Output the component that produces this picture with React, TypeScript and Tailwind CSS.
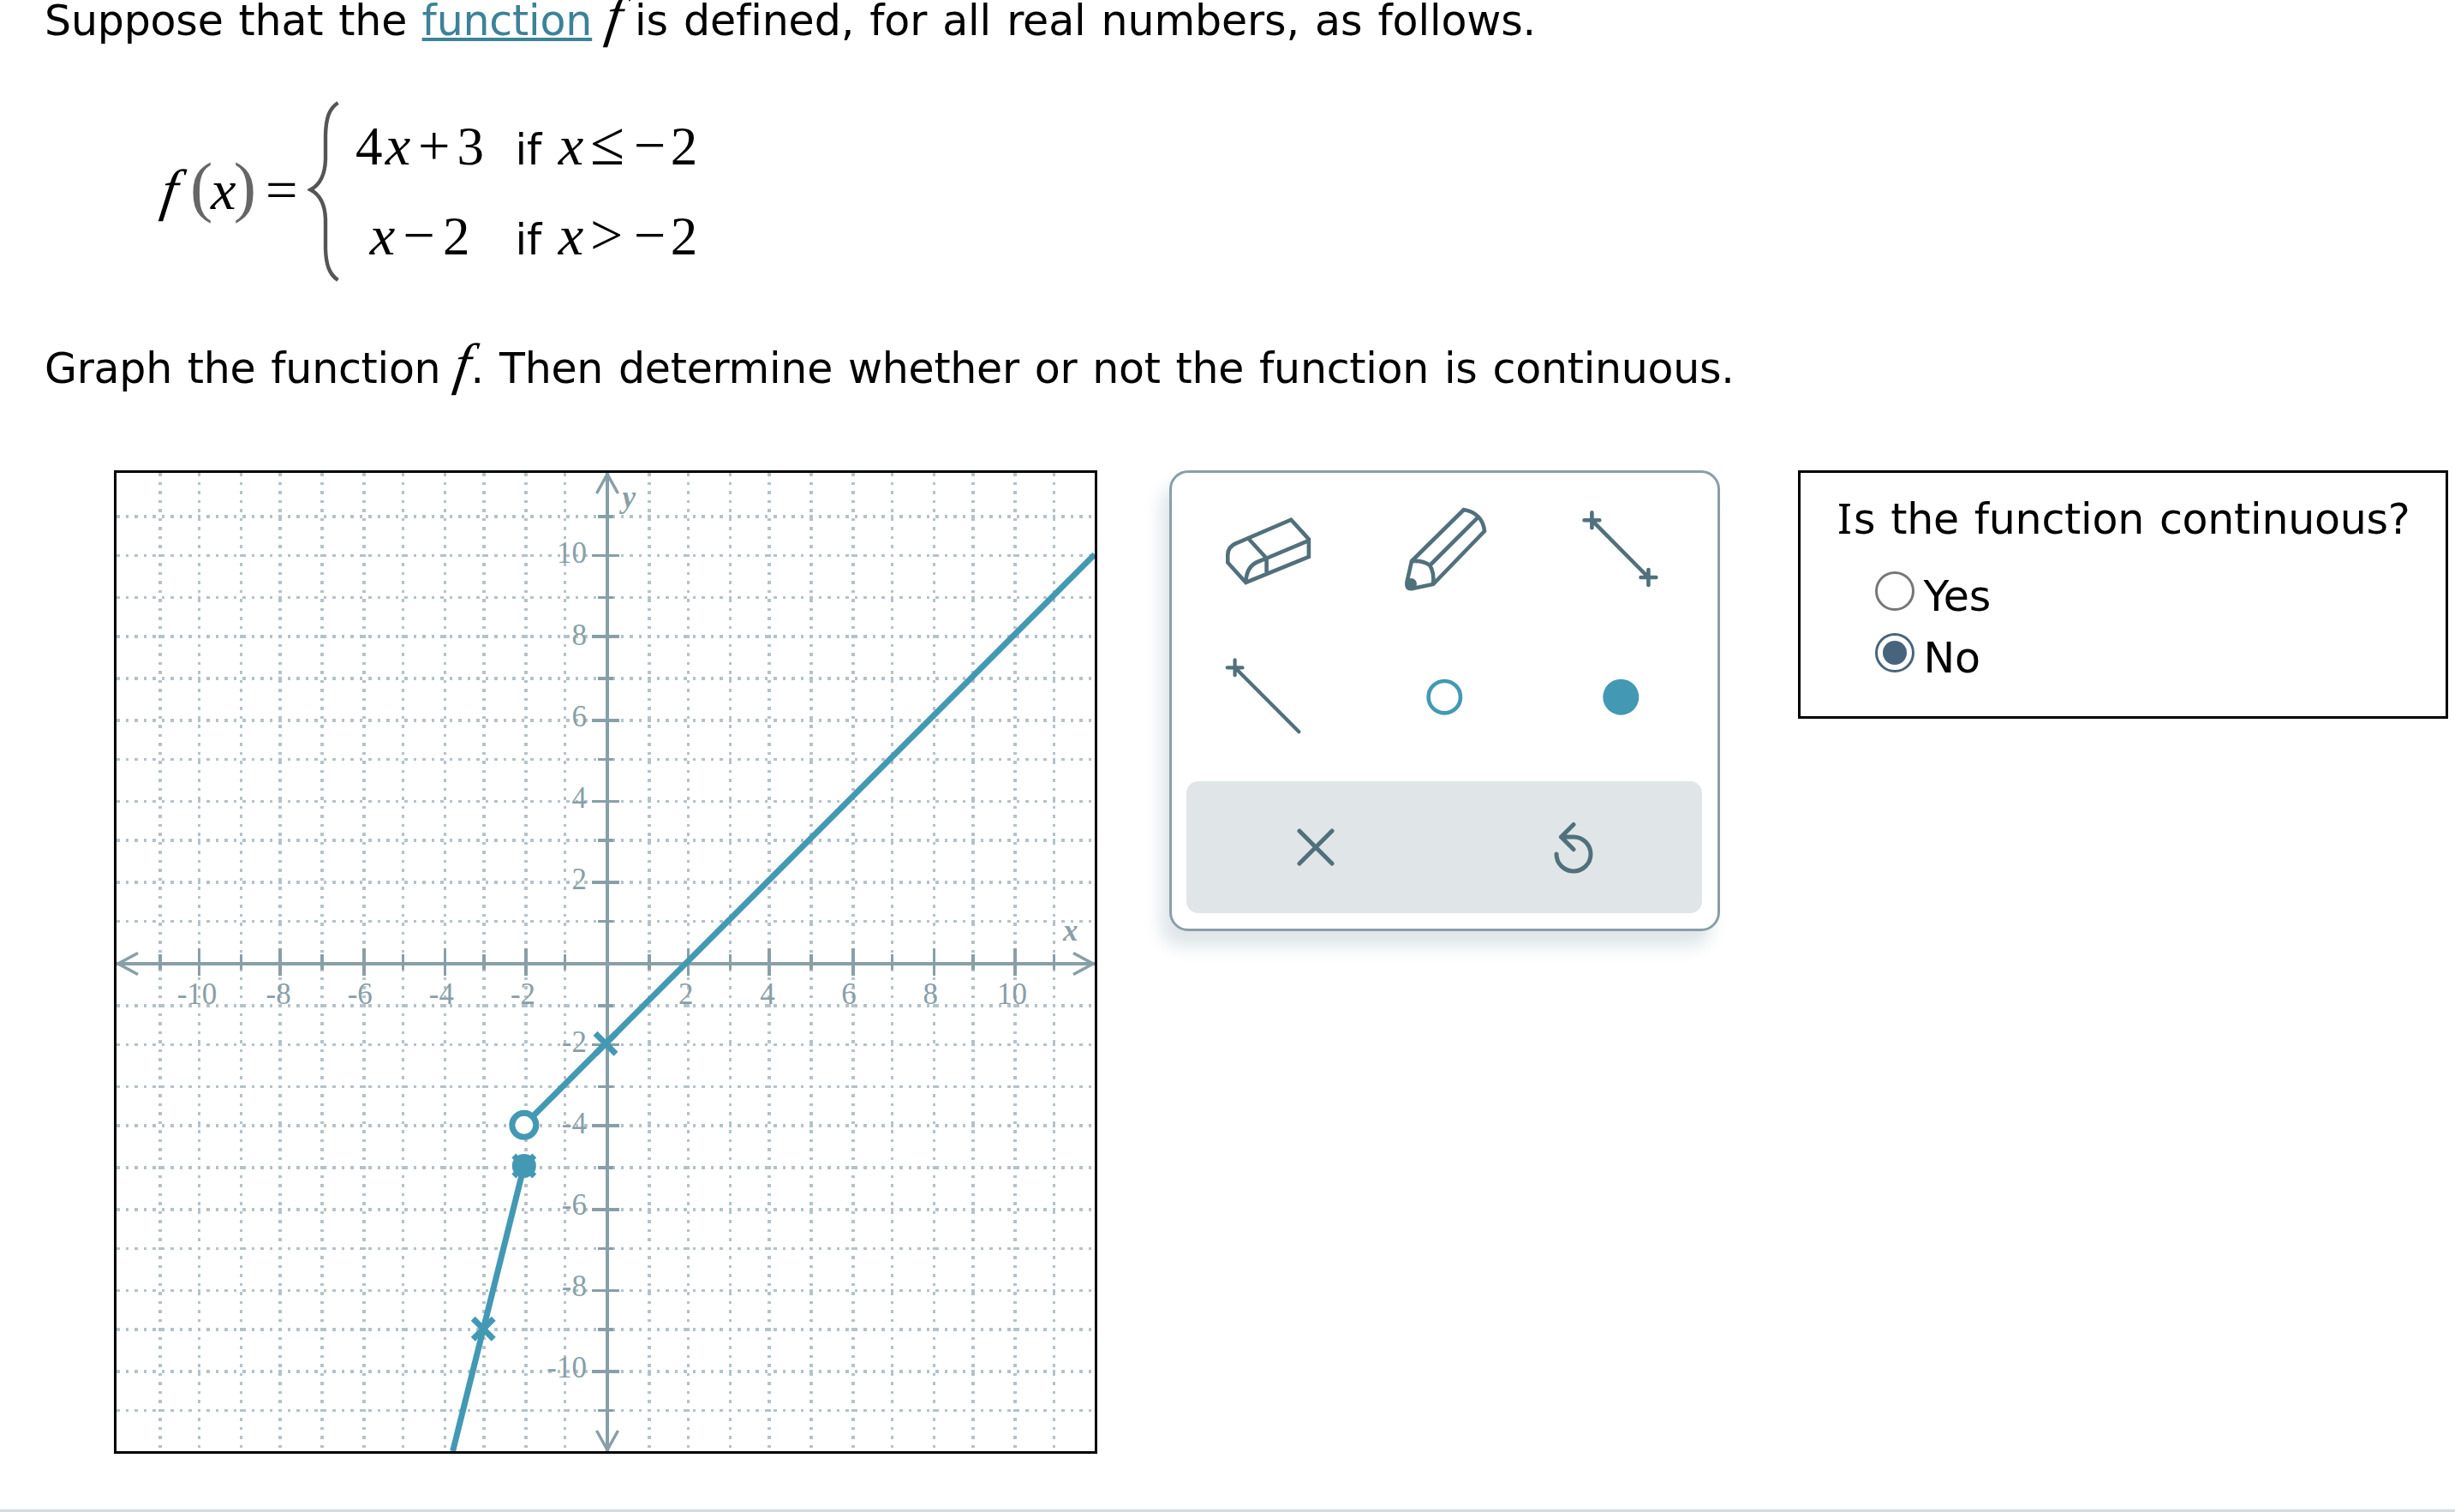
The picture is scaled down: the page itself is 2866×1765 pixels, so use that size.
import React, { useState } from 'react';
import { clsx } from 'clsx';

const AXIS = '#889fa8';
const GRID = '#b4c2c9';
const PLOT = '#4399b3';
const ICON = '#50707c';

// Left edge and thickness of the eleven grid lines before the axis; they repeat after it
const GRID_LINES = [
  [49, 4], [95, 3], [144, 3], [189, 4], [238, 4], [287, 4],
  [333, 3], [382, 3], [427, 4], [476, 4], [522, 3],
];
const LINES = [
  ...GRID_LINES.map(([pos, size], i) => ({ n: i - 11, pos, size })),
  ...GRID_LINES.map(([pos, size], i) => ({ n: i + 1, pos: pos + 571, size })),
];
const LABELS = [-10, -8, -6, -4, -2, 2, 4, 6, 8, 10];

const UNIT = 1142 / 24;
const px = (x: number) => 571 + x * UNIT;
const py = (y: number) => 571 - y * UNIT;

function Cross({ x, y }: { x: number; y: number }) {
  const cx = px(x);
  const cy = py(y);
  return (
    <path
      d={`M${cx - 12} ${cy - 12}L${cx + 12} ${cy + 12}M${cx - 12} ${cy + 12}L${cx + 12} ${cy - 12}`}
      stroke={PLOT}
      strokeWidth="7"
    />
  );
}

function Graph() {
  return (
    <div className="w-[1148px] h-[1148px] shrink-0 border-[3px] border-black">
      <svg width="1142" height="1142" viewBox="0 0 1142 1142" fill="none" className="block">
        <g stroke={GRID} strokeDasharray="4 7 3 7">
          {LINES.map(({ n, pos, size }) => {
            const c = pos + size / 2;
            return (
              <g key={n} strokeWidth={size}>
                <path d={`M${c} 0V571M${c} 578V1142`} />
                <path d={`M0 ${c}H571M578 ${c}H1142`} />
              </g>
            );
          })}
        </g>

        <g stroke={AXIS}>
          <path d="M0 573H1142M573 0V1142" strokeWidth="4" />
          {LINES.map(({ n, pos, size }) => {
            const c = pos + size / 2;
            const [a, b] = n % 2 === 0 ? [555, 587] : [562, 580];
            return <path key={n} d={`M${c} ${a}V${b}M${a} ${c}H${b}`} strokeWidth={size} />;
          })}
          <path
            d="M560.5 24L573 1.5L585.5 24M560.5 1118L573 1140.5L585.5 1118M25 560.5L2 573L25 585.5M1117 560.5L1140 573L1117 585.5"
            strokeWidth="3.5"
          />
        </g>

        <g fill={AXIS} className="font-['Liberation_Serif',serif] text-[35px] tracking-normal">
          {LABELS.map((n) => (
            <text key={`x${n}`} x={569.7 + n * 47.57} y="620" textAnchor="middle">{n}</text>
          ))}
          {LABELS.map((n) => (
            <text key={`y${n}`} x="549" y={580.9 - n * 47.55} textAnchor="end">{n}</text>
          ))}
          <text x="590.5" y="39.5" className="italic font-bold">y</text>
          <text x="1105" y="546" className="italic font-bold">x</text>
        </g>

        <path d={`M${px(-2)} ${py(-4)}L${px(12)} ${py(10)}`} stroke={PLOT} strokeWidth="7" />
        <path d={`M${px(-2)} ${py(-5)}L${px(-3.75)} ${py(-12)}`} stroke={PLOT} strokeWidth="7" />
        <Cross x={0} y={-2} />
        <Cross x={-3} y={-9} />
        <Cross x={-2} y={-5} />
        <circle cx={px(-2)} cy={py(-5)} r="14" fill={PLOT} />
        <circle cx={px(-2)} cy={py(-4)} r="14" fill="white" stroke={PLOT} strokeWidth="7" />
      </svg>
    </div>
  );
}

function Tool({ label, children }: { label: string; children: React.ReactNode }) {
  return (
    <button aria-label={label} className="w-[206px] h-[172px]">
      <svg width="206" height="172" viewBox="0 0 206 172" fill="none" stroke={ICON} strokeWidth="4.6" className="block">
        {children}
      </svg>
    </button>
  );
}

function ToolPanel() {
  return (
    <div className="w-[643px] h-[538px] shrink-0 ml-[84px] pt-[3px] rounded-[22px] border-[3px] border-[#889fa8] bg-white shadow-[-10px_18px_20px_#dfe6e9]">
      <div className="ml-[9px] grid grid-cols-[206px_206px_206px]">
        <Tool label="Eraser">
          <path d="M130.2 51.7L150.9 74.3V95L77.4 125L56.3 101.7V93Q56.3 83 66.4 79L130.2 51.7Z" />
          <path d="M80.5 73.7L101.6 96.7M150.9 76L101.6 96.7V113M101.6 96.7L92 100.5Q77.8 106 77.4 125" />
        </Tool>
        <Tool label="Pencil">
          <path d="M125.8 40L65 100L59.4 125Q58.5 133 65 132.2L90.1 127L150 65Q149 55 142.9 48.3Q136 41.5 125.8 40Z" />
          <path d="M142.9 48.3L86.2 105M65 100Q79 99 86.2 105Q91.5 113 90.1 127" />
          <circle cx="64.5" cy="126.5" r="6.5" fill={ICON} stroke="none" />
        </Tool>
        <Tool label="Line segment">
          <path
            d="M60.5 52.3H78.3M69.4 43.4V61.2M126.5 119H144.3M135.4 110.1V127.9M69.4 52.3L135.4 119"
            strokeLinecap="round"
          />
        </Tool>
        <Tool label="Ray">
          <path d="M55.7 52.3H73.5M64.6 43.4V61.2M64.6 52.3L139.4 127.2" strokeLinecap="round" strokeWidth="4.2" />
        </Tool>
        <Tool label="Open point">
          <circle cx="103.3" cy="86.7" r="18.7" stroke={PLOT} strokeWidth="4.6" />
        </Tool>
        <Tool label="Closed point">
          <circle cx="103.3" cy="86.7" r="21" fill={PLOT} stroke="none" />
        </Tool>
      </div>
      <div className="mt-[13px] ml-[17px] w-[602px] h-[154px] rounded-[14px] bg-[#e0e5e7] grid grid-cols-2 place-items-center">
        <button aria-label="Clear">
          <svg width="64" height="64" viewBox="0 0 64 64" fill="none" stroke={ICON} strokeWidth="5" strokeLinecap="round" className="block">
            <path d="M13 13L51 51M51 13L13 51" />
          </svg>
        </button>
        <button aria-label="Undo">
          <svg width="64" height="64" viewBox="0 0 64 64" fill="none" stroke={ICON} strokeWidth="5" strokeLinecap="round" strokeLinejoin="round" className="block">
            <path d="M12 40A20 20 0 1 0 32 20H17.5M32 5.5L17.5 20L32 34.5" />
          </svg>
        </button>
      </div>
    </div>
  );
}

function Radio({ label, checked, onSelect }: { label: string; checked: boolean; onSelect: () => void }) {
  return (
    <button role="radio" aria-checked={checked} onClick={onSelect} className="flex items-center h-12">
      <span
        className={clsx(
          'w-[45.5px] h-[45.5px] -mt-3 mr-[11px] rounded-full border-[3.5px] flex items-center justify-center',
          checked ? 'border-[#48637c]' : 'border-[#767676]',
        )}
      >
        {checked && <span className="w-[27.5px] h-[27.5px] rounded-full bg-[#48637c]" />}
      </span>
      <span className="pt-0.5">{label}</span>
    </button>
  );
}

function Question() {
  const [answer, setAnswer] = useState('No');
  return (
    <div className="w-[759px] h-[290px] shrink-0 ml-[91px] pt-[30px] pl-[43px] border-[3px] border-black">
      <div className="h-12 whitespace-nowrap tracking-[-0.25px]">
        <span className="inline-block w-[19px] font-['Noto_Sans',sans-serif] text-[50px] leading-[0]">I</span>
        s the function continuous?
      </div>
      <div role="radiogroup" className="mt-[42px] ml-[44px] flex flex-col items-start gap-6">
        {['Yes', 'No'].map((o) => (
          <Radio key={o} label={o} checked={answer === o} onSelect={() => setAnswer(o)} />
        ))}
      </div>
    </div>
  );
}

const italic = "inline-block italic font-['Liberation_Serif',serif] text-[66.5px] leading-[0]";

// The function letter leans further than the other variables
const fn = clsx(italic, '-skew-x-8');

function Formula() {
  return (
    <div className="mt-[70px] ml-[188.8px] h-[210px] flex font-['Liberation_Serif',serif] text-[63px] leading-[107px] tracking-normal [word-spacing:0] whitespace-nowrap">
      <div className="mt-[52px] flex-none w-[170.2px]">
        <span className={clsx(fn, 'w-[33.2px]')}>f</span>
        <span className="inline-block w-[24px] text-[79px] leading-[0] text-[#666]">(</span>
        <span className={clsx(italic, 'w-[26.7px]')}>x</span>
        <span className="inline-block w-[37.3px] text-[79px] leading-[0] text-[#666]">)</span>
        <span className="inline-block text-[66.5px] leading-[0]">=</span>
      </div>
      <svg width="40" height="212" viewBox="0 0 40 212" fill="none" stroke="#555" strokeWidth="4.4" className="block shrink-0">
        <path d="M35.5 2C25 9 21.5 20 21 40V68C20.500 84 16 97 3.500 103.500C16 110 20.500 122 21 138V172C21.500 190 25 202 35.500 209" />
      </svg>
      <div className="ml-4">
        <div className="h-[105px]">
          <span className="inline-block w-[34.8px]">4</span>
          <span className={clsx(italic, 'w-[38.2px]')}>x</span>
          <span className="inline-block w-[45.5px] text-[66.5px] leading-[0]">+</span>
          <span className="inline-block w-[68px]">3</span>
          <span className="inline-block w-[50.3px] font-['DejaVu_Sans',sans-serif] text-[49px] leading-[0]">if</span>
          <span className={clsx(italic, 'w-[37.2px]')}>x</span>
          <span className="inline-block w-[51px] text-[73px] leading-[0]">≤</span>
          <span className="inline-block w-[42.7px] text-[66.5px] leading-[0]">−</span>
          <span>2</span>
        </div>
        <div className="h-[105px] pl-[16.8px]">
          <span className={clsx(italic, 'w-[38.8px]')}>x</span>
          <span className="inline-block w-[46.4px] text-[66.5px] leading-[0]">−</span>
          <span className="inline-block w-[84.5px]">2</span>
          <span className="inline-block w-[50.3px] font-['DejaVu_Sans',sans-serif] text-[49px] leading-[0]">if</span>
          <span className={clsx(italic, 'w-[37.2px]')}>x</span>
          <span className="inline-block w-[51px] text-[68px] leading-[0]">&gt;</span>
          <span className="inline-block w-[42.7px] text-[66.5px] leading-[0]">−</span>
          <span>2</span>
        </div>
      </div>
    </div>
  );
}

export default function App() {
  return (
    <div className="w-[2866px] h-[1765px] overflow-hidden bg-white text-black font-['DejaVu_Sans',sans-serif] text-[49px] leading-[50px] tracking-[-0.2px] [word-spacing:2.6px]">
      <p className="ml-[52px] h-12 whitespace-nowrap">
        <span className="inline-block w-[440.6px]">Suppose that the</span>
        <a href="#" className="inline-block w-[198px] text-[#3c8299] underline decoration-[4px] underline-offset-[3px] [text-decoration-skip-ink:none]">function</a>
        <span className={clsx(fn, 'ml-[17px] w-[33.5px]')}>f</span>
        <span className="tracking-[-0.12px]">is defined, for all real numbers, as follows.</span>
      </p>

      <Formula />

      <p className="ml-[52px] mt-[78px] h-12 whitespace-nowrap tracking-[-0.27px]">
        <span className="inline-block w-[478.7px]">Graph the function</span>
        <span className={clsx(fn, 'w-[18.8px]')}>f</span>
        <span className="inline-block w-[33.5px]">.</span>
        Then determine whether or not the function is continuous.
      </p>

      <div className="mt-[95px] ml-[133px] flex items-start">
        <Graph />
        <ToolPanel />
        <Question />
      </div>

      <div className="mt-[65px] h-[3px] bg-[#d4dade]" />
    </div>
  );
}
